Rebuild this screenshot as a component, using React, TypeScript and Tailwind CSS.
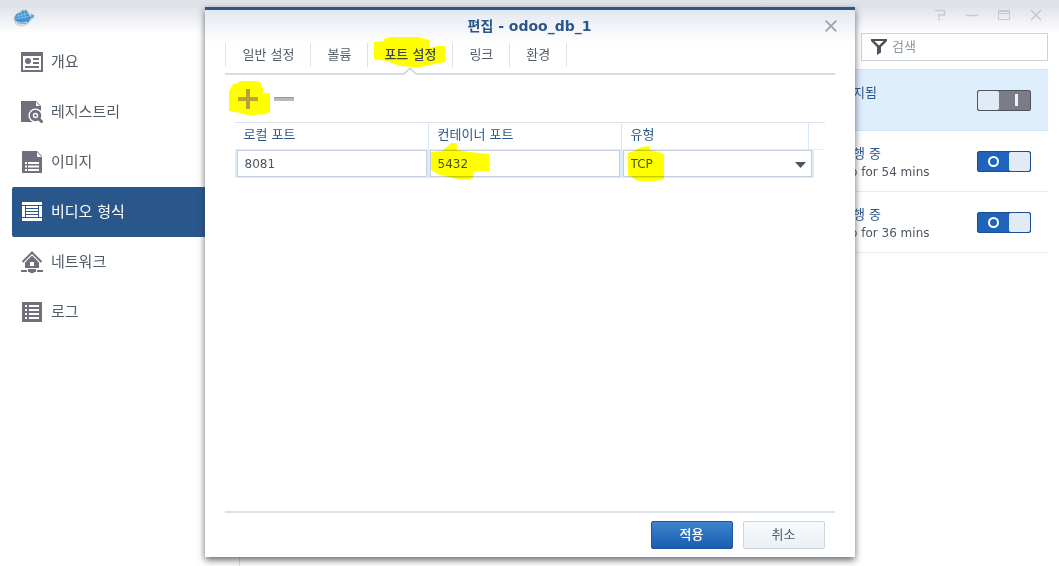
import React, { useState } from "react";

type NavItem = { id: string; label: string; icon: React.ReactNode };

function OverviewIcon() {
  return (
    <svg width="22" height="20" viewBox="0 0 22 20" className="shrink-0" aria-hidden="true">
      <path fill="currentColor" fillRule="evenodd" d="M0 0h22v20H0zM2 4v14h18V4z" />
      <circle cx="7" cy="9" r="3" fill="currentColor" />
      <path fill="currentColor" d="M12 6h6v2h-6zM12 10h6v2h-6zM4 14h14v2H4z" />
    </svg>
  );
}

function RegistryIcon() {
  return (
    <svg width="22" height="22" viewBox="0 0 22 22" className="shrink-0" aria-hidden="true">
      <path fill="currentColor" d="M0 0h15l5 5v16H0z" />
      <path fill="#fff" d="M15 1v4h4z" />
      <circle cx="14.5" cy="14.5" r="7" fill="#fff" />
      <path stroke="#fff" strokeWidth="5" d="M17 17l5 5" />
      <circle cx="14.5" cy="14.5" r="4.2" fill="none" stroke="currentColor" strokeWidth="3" />
      <circle cx="14.5" cy="14.5" r="1.3" fill="currentColor" />
      <path stroke="currentColor" strokeWidth="3" d="M17.5 17.5l4 4" />
    </svg>
  );
}

function ImageIcon() {
  return (
    <svg width="22" height="22" viewBox="0 0 22 22" className="shrink-0" aria-hidden="true">
      <path fill="currentColor" d="M1 0h15l5 5v17H1z" />
      <path
        fill="#fff"
        d="M16 1v5h5zM4 11h2v2H4zM7 11h11v2H7zM4 14.500h2v2H4zM7 14.500h11v2H7zM4 18h2v2H4zM7 18h11v2H7z"
      />
    </svg>
  );
}

function ContainerIcon() {
  return (
    <svg width="22" height="20" viewBox="0 0 22 20" className="shrink-0" aria-hidden="true">
      <path
        fill="currentColor"
        d="M1 0h20v3H1zM1 16h20v3H1zM1 4h3v11H1zM18 4h3v11h-3zM5 4h12v2H5zM5 7h12v2H5zM5 10h12v2H5zM5 13h12v2H5z"
      />
    </svg>
  );
}

function NetworkIcon() {
  return (
    <svg width="22" height="22" viewBox="0 0 22 22" className="shrink-0" aria-hidden="true">
      <path fill="none" stroke="currentColor" strokeWidth="2" d="M1.500 11L11 1.500l9.500 9.500" />
      <path fill="currentColor" fillRule="evenodd" d="M11 4.500l7 7V17H4v-5.500zM9 11v4h4v-4z" />
      <path fill="currentColor" d="M0 19h6v2H0zM16 19h6v2h-6zM7 18h8v3h-2v1H9v-1H7z" />
    </svg>
  );
}

function LogIcon() {
  return (
    <svg width="22" height="20" viewBox="0 0 22 20" className="shrink-0" aria-hidden="true">
      <path
        fill="currentColor"
        fillRule="evenodd"
        d="M1 0h20v20H1zM4 3v2h2V3zM8 3v2h10V3zM4 7v2h2V7zM8 7v2h10V7zM4 11v2h2v-2zM8 11v2h10v-2zM4 15v2h2v-2zM8 15v2h10v-2z"
      />
    </svg>
  );
}

function WhaleLogo() {
  return (
    <svg width="22" height="18" viewBox="0 0 22 18" aria-hidden="true">
      <path
        d="M.8 9L3 5l4-2.500 2-1.500h5l2 3.500L18 7l.3-3 2 2 1.500.5-1 2.500-3 2-3 4-5 2H7l-4.500-2z"
        fill="#d9dee2"
        stroke="#bcc5cb"
        strokeWidth=".6"
      />
      <path
        d="M1.500 8.500L3.500 5l4-1.500 2-2h4l1.800 3L17.500 8l1-.8V4.500l1 1.500 1.500.5c-.5 1.500-1.500 2.500-3.500 3-.8 3.500-4 5.500-8 5.500-4.500 0-8-2-8-6.500z"
        fill="#4295d2"
      />
      <path
        d="M5 4.500l1.500 5M8 3l1.500 6.500M11 2l1.500 7M3 7.500l12-3M2 10l14-2.500"
        stroke="#8fc6ec"
        strokeWidth=".7"
      />
      <path d="M3 12.500c3 2 7 2 11 .5" stroke="#eef4f8" strokeWidth=".8" fill="none" />
    </svg>
  );
}

const NAV: NavItem[] = [
  { id: "overview", label: "개요", icon: <OverviewIcon /> },
  { id: "registry", label: "레지스트리", icon: <RegistryIcon /> },
  { id: "image", label: "이미지", icon: <ImageIcon /> },
  { id: "container", label: "비디오 형식", icon: <ContainerIcon /> },
  { id: "network", label: "네트워크", icon: <NetworkIcon /> },
  { id: "log", label: "로그", icon: <LogIcon /> },
];

const TABS = ["일반 설정", "볼륨", "포트 설정", "링크", "환경"];

const CONTAINERS = [
  { id: 1, status: "정지됨", uptime: "", running: false, selected: true },
  { id: 2, status: "실행 중", uptime: "Up for 54 mins", running: true, selected: false },
  { id: 3, status: "실행 중", uptime: "Up for 36 mins", running: true, selected: false },
];

function PowerSwitch({ on, label }: { on: boolean; label: string }) {
  const [value, setValue] = useState(on);
  return (
    <button
      type="button"
      role="switch"
      aria-checked={value}
      aria-label={label}
      onClick={() => setValue(!value)}
      className={
        value
          ? "flex h-[21px] w-[54px] shrink-0 overflow-hidden rounded-xs border border-[#1c4f92] bg-[#1f63bd]"
          : "flex h-[21px] w-[54px] shrink-0 flex-row-reverse overflow-hidden rounded-xs border border-[#4b555c] bg-[#7c7c88]"
      }
    >
      <span className="flex h-full flex-1 items-center justify-center">
        {value ? (
          <span className="size-[11px] rounded-full border-2 border-white" />
        ) : (
          <span className="ml-1 h-3 w-[3px] bg-[#eef1f8]" />
        )}
      </span>
      <span className="h-full w-[21px] rounded-xs bg-[#e2eaf5]" />
    </button>
  );
}

function Sidebar() {
  return (
    <nav className="flex w-60 shrink-0 flex-col border-r border-[#dcdfe3] pl-3">
      {NAV.map((item) => (
        <a
          key={item.id}
          href={"#" + item.id}
          className={
            item.id === "container"
              ? "flex h-[50px] items-center gap-2 rounded-l-xs bg-[#2a578b] pl-[9px] text-[15px] text-white"
              : "flex h-[50px] items-center gap-2 pl-[9px] text-[15px] text-[#535c66]"
          }
        >
          <span className={item.id === "container" ? "text-white" : "text-[#6f707c]"}>{item.icon}</span>
          <span>{item.label}</span>
        </a>
      ))}
    </nav>
  );
}

function WindowControls() {
  return (
    <div className="flex items-center gap-5 text-[#c5cacf]">
      <button type="button" aria-label="도움말">
        <svg width="12" height="12" viewBox="0 0 12 12" fill="none" stroke="currentColor" strokeWidth="1.500">
          <path d="M1 1.500h9.500v4.500H5v2.500M4 10.500h2" />
        </svg>
      </button>
      <button type="button" aria-label="최소화">
        <svg width="12" height="12" viewBox="0 0 12 12" stroke="currentColor" strokeWidth="1.500">
          <path d="M0 6.500h12" />
        </svg>
      </button>
      <button type="button" aria-label="최대화">
        <svg width="12" height="12" viewBox="0 0 12 12" fill="none" stroke="currentColor">
          <path d="M.5 1.500h11v9H.5zM.5 2.500h11M.5 4.500h11" />
        </svg>
      </button>
      <button type="button" aria-label="창 닫기">
        <svg width="12" height="12" viewBox="0 0 12 12" stroke="currentColor" strokeWidth="1.500">
          <path d="M1 1l10 10M11 1L1 11" />
        </svg>
      </button>
    </div>
  );
}

function ContainerList() {
  return (
    <main className="flex flex-1 flex-col pr-[11px] pl-5">
      <label className="relative mt-[-4px] flex h-7 w-[187px] items-center self-end border border-[#ccd3dc] bg-white pl-2">
        <svg width="18" height="18" viewBox="0 0 18 18" className="shrink-0" aria-hidden="true">
          <path
            fill="#4a545c"
            fillRule="evenodd"
            d="M1 1h16v2l-6 6v5.500L7 17V9L1 3zM4.500 3L9 7.500 13.500 3z"
          />
        </svg>
        <input
          type="search"
          placeholder="검색"
          aria-label="검색"
          className="w-full min-w-0 bg-transparent pl-1 text-[13px] outline-none placeholder:text-[#8f979f]"
        />
      </label>
      <ul className="mt-2 border-t border-[#d3e3f3]">
        {CONTAINERS.map((c) => (
          <li
            key={c.id}
            className={
              c.selected
                ? "flex h-[61px] items-center justify-end border-b border-[#d3e3f3] bg-[#dfeefc] pr-[17px]"
                : "flex h-[61px] items-center justify-end border-b border-[#e6e9ed] pr-[17px]"
            }
          >
            <div className="flex h-full w-[136px] flex-col pt-[14px]">
              <span className="text-[13px] leading-[18px] text-[#2a578b]">{c.status}</span>
              <span className="text-xs leading-[18px] text-[#4b5660]">{c.uptime}</span>
            </div>
            <PowerSwitch on={c.running} label={"전원 " + c.id} />
          </li>
        ))}
      </ul>
    </main>
  );
}

function TabBar({ active, onSelect }: { active: string; onSelect: (t: string) => void }) {
  return (
    <div role="tablist" className="flex border-b-2 border-[#d6dee6] pb-[6px]">
      {TABS.map((t) => (
        <button
          key={t}
          type="button"
          role="tab"
          aria-selected={t === active}
          onClick={() => onSelect(t)}
          className={
            t === active
              ? "relative h-6 border-r border-[#dde2ea] px-4 text-[13px] font-medium text-[#3c4650]"
              : "relative h-6 border-r border-[#dde2ea] px-4 text-[13px] text-[#505b66] first:border-l first:pl-[17px]"
          }
        >
          {t === "포트 설정" && (
            <svg
              width="72"
              height="31"
              viewBox="374 37 72 31"
              className="absolute -top-[6px] left-[6px]"
              aria-hidden="true"
            >
              <path
                fill="#ff0"
                d="M374 42L384 41V39L390 37H418L429 40V48L437 46H445V62L435 64L420 67H412L400 66L387 61L374 59Z"
              />
            </svg>
          )}
          <span className="relative">{t}</span>
          {t === active && (
            <svg
              width="16"
              height="8"
              viewBox="0 0 16 8"
              className="absolute -bottom-2 left-1/2 -translate-x-1/2"
              aria-hidden="true"
            >
              <path d="M1 8L8 1l7 7z" fill="#fff" />
              <path d="M0 7h2L8 1l6 6h2" fill="none" stroke="#ccd5de" strokeWidth="1.500" />
            </svg>
          )}
        </button>
      ))}
    </div>
  );
}

function PortToolbar() {
  return (
    <div className="flex items-center gap-4 pl-[13px]">
      <button type="button" aria-label="추가" className="relative size-5">
        <svg
          width="42"
          height="35"
          viewBox="229 81 42 35"
          className="absolute -top-2 -left-[9px] max-w-none"
          aria-hidden="true"
        >
          <path
            fill="#ff0"
            d="M229 91L233 84L238 83L240 81H256L261 83V88H263V93H270V112L265 114L253 115H246L240 113L229 111Z"
          />
        </svg>
        <svg width="20" height="20" viewBox="0 0 20 20" className="relative" aria-hidden="true">
          <path d="M8 0h4v8h8v4h-8v8H8v-8H0V8h8z" fill="#b7a238" />
        </svg>
      </button>
      <button type="button" aria-label="삭제" className="size-5">
        <svg width="20" height="20" viewBox="0 0 20 20" aria-hidden="true">
          <path d="M0 8h20v4H0z" fill="#b9b9bd" />
          <path d="M0 8h20v1H0z" fill="#98989e" />
        </svg>
      </button>
    </div>
  );
}

function PortTable() {
  const field =
    "block h-[27px] w-full appearance-none border border-[#c5d0dc] bg-white px-[7px] text-xs text-[#4b5660] outline-none";
  return (
    <table className="w-full table-fixed border-separate border-spacing-0 text-left">
      <colgroup>
        <col className="w-[194px]" />
        <col className="w-[193px]" />
        <col className="w-[187px]" />
        <col />
      </colgroup>
      <thead>
        <tr className="h-[28px] text-[13px] text-[#2a578b] [&>th]:border-y [&>th]:border-t-[#dde3ec] [&>th]:border-b-[#e9edf2] [&>th]:pt-0 [&>th]:pb-[2px] [&>th]:font-normal">
          <th className="border-r border-r-[#d9e6f4] pl-[9px]">로컬 포트</th>
          <th className="border-r border-r-[#d9e6f4] pl-[9px]">컨테이너 포트</th>
          <th className="border-r border-r-[#d9e6f4] pl-[9px]">유형</th>
          <th />
        </tr>
      </thead>
      <tbody>
        <tr>
          <td className="bg-[#dcebfa] px-[2px] pt-0 pb-px">
            <input className={field} defaultValue="8081" aria-label="로컬 포트" />
          </td>
          <td className="relative bg-[#dcebfa] pt-0 pr-[2px] pb-px pl-px">
            <input className={field} defaultValue="5432" aria-label="컨테이너 포트" />
            <svg
              width="60"
              height="38"
              viewBox="430 143 60 38"
              className="pointer-events-none absolute -top-[7px] left-px mix-blend-multiply"
              aria-hidden="true"
            >
              <path
                fill="#ff0"
                d="M431 152L442 151L449 145L451 143H457V150L470 152L489 154V171H474L473 178L467 180L457 179L440 175L431 170Z"
              />
            </svg>
          </td>
          <td colSpan={2} className="relative pr-[11px]">
            <div className="relative bg-[#dcebfa] pr-[2px] pb-px pl-px">
              <select className={field} aria-label="유형" defaultValue="TCP">
                <option>TCP</option>
                <option>UDP</option>
              </select>
              <svg
                width="12"
                height="6"
                viewBox="0 0 12 6"
                className="pointer-events-none absolute top-3 right-[7px]"
                aria-hidden="true"
              >
                <path d="M0 0h11L5.500 6z" fill="#4a5860" />
              </svg>
              <svg
                width="38"
                height="37"
                viewBox="627 146 38 37"
                className="pointer-events-none absolute -top-1 left-[5px] mix-blend-multiply"
                aria-hidden="true"
              >
                <path
                  fill="#ff0"
                  d="M628 153L634 151L641 147L649 146L650 150L662 153L664 155V179L656 181H640L635 180L632 177L628 175Z"
                />
              </svg>
            </div>
          </td>
        </tr>
      </tbody>
    </table>
  );
}

function EditDialog() {
  const [tab, setTab] = useState("포트 설정");
  return (
    <section
      role="dialog"
      aria-labelledby="dialog-title"
      className="flex w-full max-w-[650px] flex-col border-t-[3px] border-[#2a578b] bg-white px-5 pb-2 shadow-[0_3px_7px_0_rgba(50,52,66,0.75)]"
    >
      <header className="relative -mx-5 flex h-[33px] items-center justify-center bg-linear-to-b from-[#e3e8f2] to-white pb-[2px]">
        <h1 id="dialog-title" className="text-sm font-bold text-[#2a578b]">
          편집 - odoo_db_1
        </h1>
        <button type="button" aria-label="닫기" className="absolute right-[18px]">
          <svg width="12" height="12" viewBox="0 0 12 12" stroke="#9ba4ad" strokeWidth="1.800">
            <path d="M.7.7l10.600 10.600M11.300.7L.7 11.300" />
          </svg>
        </button>
      </header>
      <TabBar active={tab} onSelect={setTab} />
      <div className="flex flex-1 flex-col gap-[13px] pt-[14px] pr-[10px]">
        <PortToolbar />
        <div className="-mr-[10px] pr-[10px] pl-[10px]">
          <PortTable />
        </div>
      </div>
      <footer className="flex justify-end gap-[10px] border-t-2 border-[#dce2e8] pt-2 pr-[10px]">
        <button
          type="button"
          className="h-7 w-[82px] rounded-xs border border-[#1b56a0] bg-linear-to-b from-[#3c83cb] to-[#1b5cb2] text-[13px] font-medium text-white"
        >
          적용
        </button>
        <button
          type="button"
          className="h-7 w-[82px] rounded-xs border border-[#ced6de] bg-linear-to-b from-[#f8fbfd] to-[#eaf0f5] text-[13px] text-[#505b66]"
        >
          취소
        </button>
      </footer>
    </section>
  );
}

export default function App() {
  return (
    <div className="relative flex min-h-screen flex-col bg-white font-['DejaVu_Sans','Noto_Sans_CJK_KR',sans-serif]">
      <header className="flex h-[37px] items-start justify-between bg-linear-to-b from-[#dfe2e8] from-15% to-white to-90% pt-[9px] pr-[17px] pl-[13px]">
        <WhaleLogo />
        <WindowControls />
      </header>
      <div className="flex flex-1">
        <Sidebar />
        <ContainerList />
      </div>
      <div className="absolute inset-0 flex items-stretch justify-center pt-[7px] pb-[9px]">
        <EditDialog />
      </div>
    </div>
  );
}
